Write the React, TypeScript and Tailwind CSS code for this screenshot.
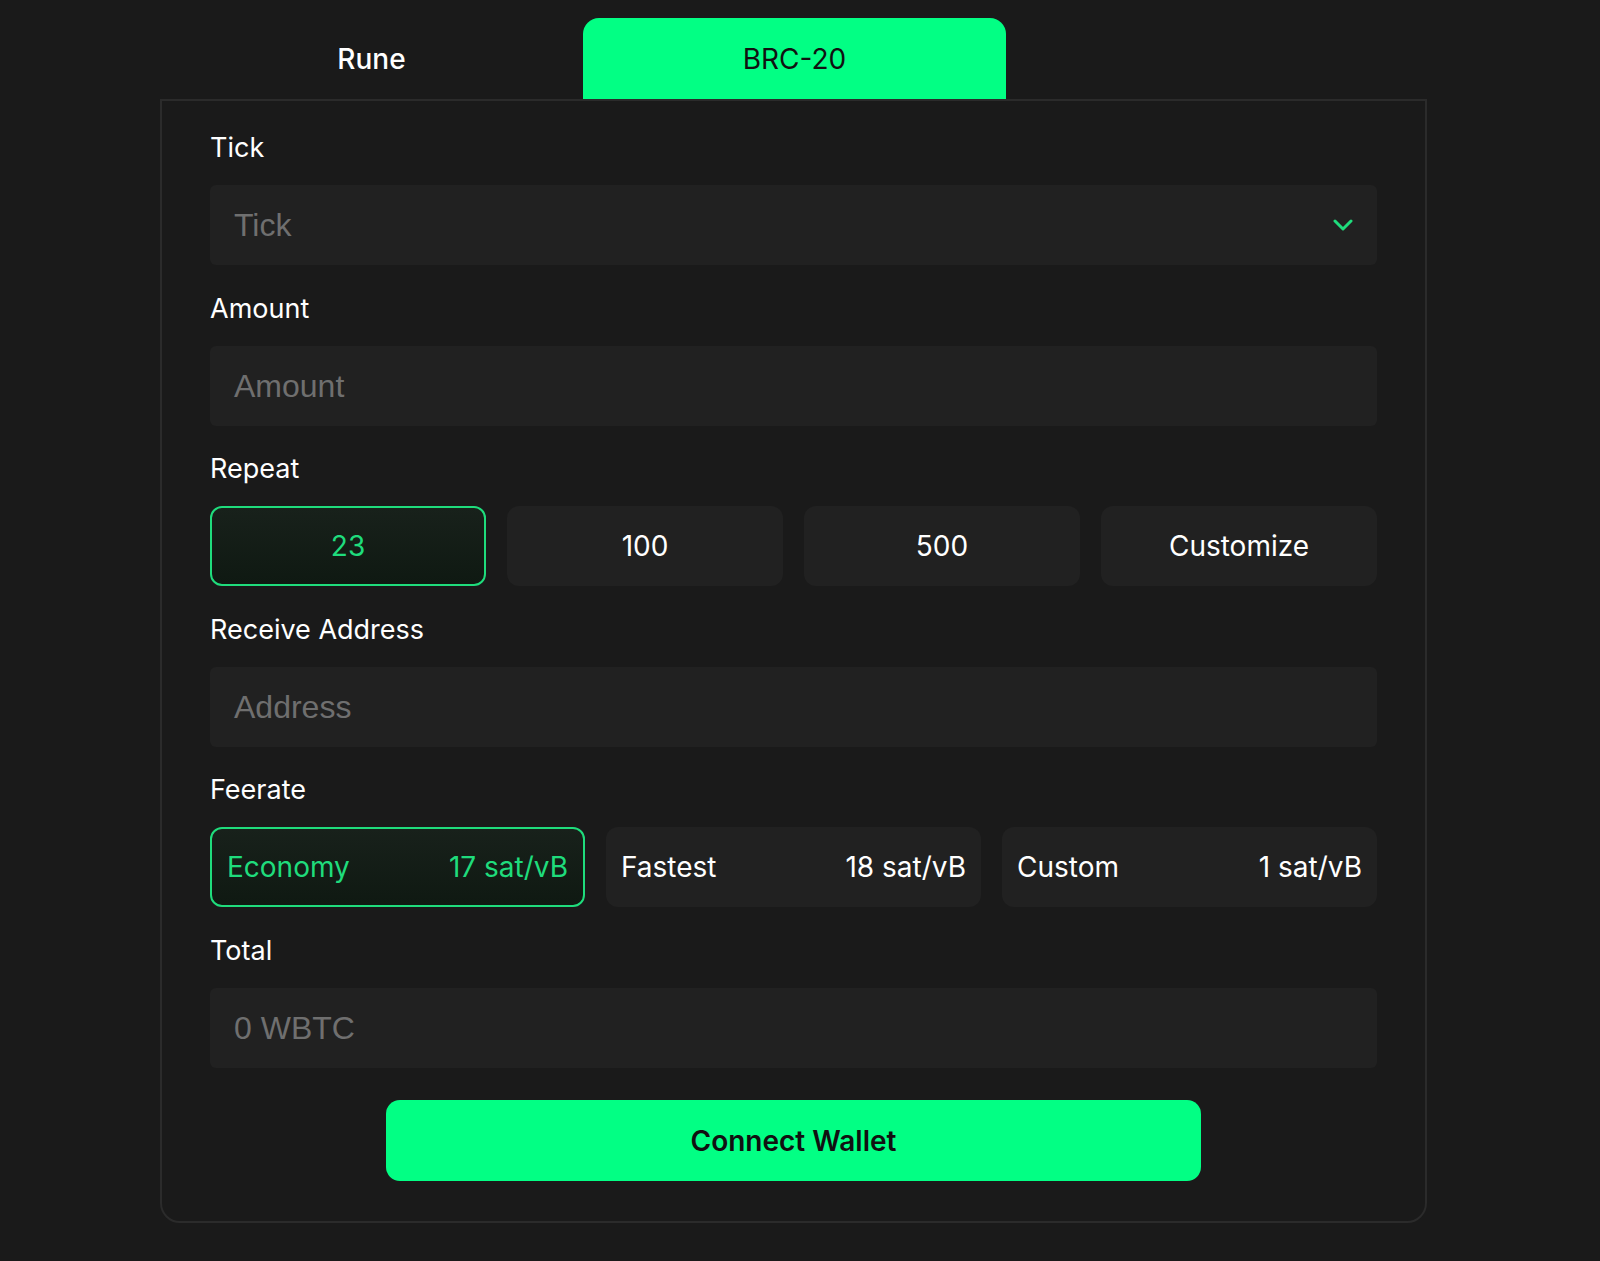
import { useState } from "react";

const font = { fontFamily: "Inter, 'Noto Sans', sans-serif" };
const inputFont = { fontFamily: "'Liberation Sans', Arial, sans-serif" };

function Label({ children }: { children: string }) {
  return <div className="h-8 text-[27px] leading-8 text-white">{children}</div>;
}

function Field({ placeholder, chevron }: { placeholder: string; chevron?: boolean }) {
  return (
    <div className="mt-[21px] flex h-20 items-center justify-between rounded-md bg-[#212121] pl-[24px] pr-[24px]">
      <span style={inputFont} className="text-[32px] text-[#6f6f6f]">{placeholder}</span>
      {chevron && (
        <svg width="20" height="12" viewBox="0 0 20 12" fill="none">
          <path d="M2 2l8 8 8-8" stroke="#1fdc7c" strokeWidth="3" strokeLinecap="round" strokeLinejoin="round" />
        </svg>
      )}
    </div>
  );
}

export default function App() {
  const [tab, setTab] = useState("BRC-20");
  const [repeat, setRepeat] = useState("23");
  const [fee, setFee] = useState("Economy");
  const fees = [
    ["Economy", "17 sat/vB"],
    ["Fastest", "18 sat/vB"],
    ["Custom", "1 sat/vB"]
  ];

  return (
    <div style={font} className="min-h-screen bg-[#1a1a1a] pt-[18px]">
      <div className="ml-[160px] w-[1267px]">
        <div className="flex h-[81px]">
          {["Rune", "BRC-20"].map((t) =>
            <button
              key={t}
              onClick={() => setTab(t)}
              className={
                tab === t
                  ? "w-[423px] rounded-t-[16px] bg-[#02ff84] text-[28px] text-[#111]"
                  : "w-[423px] text-[28px] font-medium text-white"
              }
            >
              {t}
            </button>
          )}
        </div>

        <div className="flex flex-col gap-[27.5px] rounded-b-[20px] border-2 border-[#2b2b2b] px-[48px] pt-[31px] pb-[40px]">
          <div>
            <Label>Tick</Label>
            <Field placeholder="Tick" chevron />
          </div>
          <div>
            <Label>Amount</Label>
            <Field placeholder="Amount" />
          </div>
          <div>
            <Label>Repeat</Label>
            <div className="mt-[21px] grid grid-cols-4 gap-[21px]">
              {["23", "100", "500", "Customize"].map((r) =>
                <button
                  key={r}
                  onClick={() => setRepeat(r)}
                  className={
                    repeat === r
                      ? "h-20 rounded-xl border-2 border-[#1fdc7c] bg-gradient-to-b from-[#18211b] to-[#0f1912] text-[28px] text-[#1fdc7c]"
                      : "h-20 rounded-xl border-2 border-transparent bg-[#212121] text-[28px] text-white"
                  }
                >
                  {r}
                </button>
              )}
            </div>
          </div>
          <div>
            <Label>Receive Address</Label>
            <Field placeholder="Address" />
          </div>
          <div>
            <Label>Feerate</Label>
            <div className="mt-[21px] grid grid-cols-3 gap-[21px]">
              {fees.map(([name, rate]) =>
                <button
                  key={name}
                  onClick={() => setFee(name)}
                  className={
                    fee === name
                      ? "flex h-20 items-center justify-between rounded-xl border-2 border-[#1fdc7c] bg-gradient-to-b from-[#18211b] to-[#0f1912] px-[15px] text-[28px] text-[#1fdc7c]"
                      : "flex h-20 items-center justify-between rounded-xl border-2 border-transparent bg-[#212121] px-[13px] text-[28px] text-white"
                  }
                >
                  <span>{name}</span>
                  <span>{rate}</span>
                </button>
              )}
            </div>
          </div>
          <div>
            <Label>Total</Label>
            <Field placeholder="0 WBTC" />
          </div>
          <button className="mx-auto mt-[5px] h-[81px] w-[815px] rounded-[14px] bg-[#02ff84] text-[28px] font-semibold text-[#111]">
            Connect Wallet
          </button>
        </div>
      </div>
    </div>
  );
}
